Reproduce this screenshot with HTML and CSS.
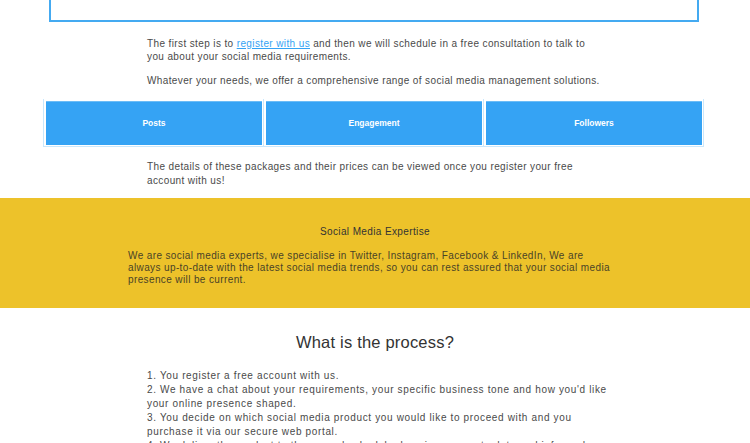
FILE: index.html
```html
<!DOCTYPE html>
<html>
<head>
<meta charset="utf-8">
<link rel="stylesheet" href="styles.css">
</head>
<body>
<div class="top-box"></div>
<section class="intro">
  <p>The first step is to <a href="#">register with us</a> and then we will schedule in a free consultation to talk to you about your social media requirements.</p>
  <p>Whatever your needs, we offer a comprehensive range of social media management solutions.</p>
</section>
<div class="packages">
  <div class="pkg"><div class="pkg-inner">Posts</div></div>
  <div class="pkg"><div class="pkg-inner">Engagement</div></div>
  <div class="pkg pkg-last"><div class="pkg-inner">Followers</div></div>
</div>
<section class="intro details">
  <p>The details of these packages and their prices can be viewed once you register your free account with us!</p>
</section>
<section class="expertise">
  <div class="expertise-inner">
    <h3>Social Media Expertise</h3>
    <p>We are social media experts, we specialise in Twitter, Instagram, Facebook &amp; LinkedIn, We are always up-to-date with the latest social media trends, so you can rest assured that your social media presence will be current.</p>
  </div>
</section>
<section class="process">
  <h2>What is the process?</h2>
  <div class="steps">
    1. You register a free account with us.<br>
    2. We have a chat about your requirements, your specific business tone and how you'd like your online presence shaped.<br>
    3. You decide on which social media product you would like to proceed with and you purchase it via our secure web portal.<br>
    4. We deliver the product to the agreed schedule, keeping you up to date and informed every step of the way.
  </div>
</section>
</body>
</html>
```
FILE: styles.css
```css
html, body {
  margin: 0;
  padding: 0;
  background: #ffffff;
}
body {
  font-family: "Liberation Sans", Arial, sans-serif;
  color: #4a4a4a;
  font-size: 10px;
  letter-spacing: 0.38px;
}
.top-box {
  width: 646px;
  height: 20px;
  margin: 0 0 0 49px;
  border: 2px solid #44aaf1;
  border-top: 0;
}
.intro {
  width: 456px;
  margin: 0 auto;
  padding-top: 16px;
}
.intro p {
  margin: 0;
  line-height: 12.5px;
}
.intro p + p {
  margin-top: 12px;
}
.intro a {
  color: #35a3f4;
}
.packages {
  display: flex;
  width: 661px;
  margin: 11px 0 0 43px;
}
.pkg {
  flex: 1;
  border-left: 1px solid #c9e7fc;
  border-bottom: 1px solid #c9e7fc;
  padding: 2px 1px 1px 2px;
}
.pkg-last {
  border-right: 1px solid #c9e7fc;
}
.pkg-inner {
  background: #35a3f4;
  border-top: 1px solid #6cbcf6;
  height: 43px;
  display: flex;
  align-items: center;
  justify-content: center;
  color: #ffffff;
  font-weight: bold;
  font-size: 8.5px;
  letter-spacing: 0;
}
.details {
  padding-top: 13px;
}
.details p {
  line-height: 14px;
}
.expertise {
  margin-top: 10px;
  background: #edc22a;
  height: 110px;
  box-sizing: border-box;
  padding-top: 28px;
}
.expertise-inner {
  width: 488px;
  margin: 0 auto;
  padding-right: 6px;
}
.expertise h3 {
  margin: 0;
  text-align: center;
  font-weight: normal;
  font-size: 10px;
  color: #333333;
  line-height: 12px;
  padding-left: 6px;
}
.expertise p {
  margin: 12px 0 0;
  line-height: 12px;
  color: #4a4327;
}
.process {
  width: 456px;
  margin: 0 auto;
}
.process h2 {
  margin: 0;
  padding-top: 24px;
  font-weight: normal;
  font-size: 16.5px;
  letter-spacing: 0.2px;
  color: #333333;
  text-align: center;
  line-height: 20px;
}
.steps {
  width: 465px;
  margin-top: 17px;
  line-height: 14px;
  letter-spacing: 0.65px;
}
```
